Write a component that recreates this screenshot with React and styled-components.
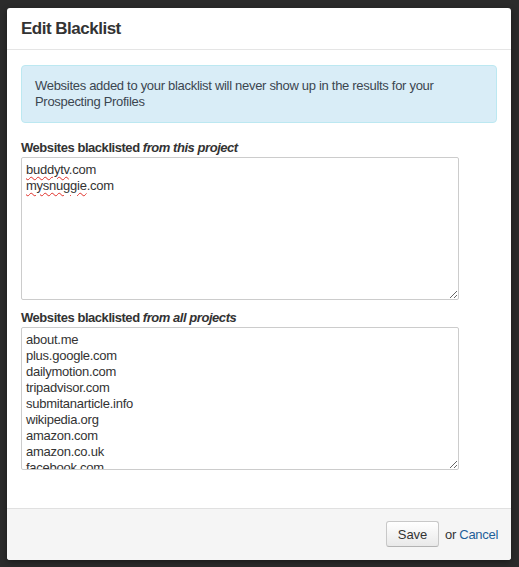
import React from "react";
import styled, { createGlobalStyle } from "styled-components";

const GlobalStyle = createGlobalStyle`
  html, body {
    margin: 0;
    padding: 0;
    background: #2b2b2b;
  }
  body {
    font-family: "Liberation Sans", Arial, sans-serif;
    font-size: 13px;
    color: #333;
  }
`;

const thisProject = ["buddytv.com", "mysnuggie.com"];
const allProjects = [
  "about.me",
  "plus.google.com",
  "dailymotion.com",
  "tripadvisor.com",
  "submitanarticle.info",
  "wikipedia.org",
  "amazon.com",
  "amazon.co.uk",
  "facebook.com",
];

// words the browser's spell checker flags in the reference
const flagged = { "buddytv.com": "buddytv", "mysnuggie.com": "mysnuggie" };

const App = () => {
  return (
    <Page>
      <GlobalStyle />
      <Modal>
        <Header>
          <Title>Edit Blacklist</Title>
        </Header>
        <Body>
          <Alert>
            Websites added to your blacklist will never show up in the results
            for your Prospecting Profiles
          </Alert>
          <Label>
            Websites blacklisted <em>from this project</em>
          </Label>
          <ListBox contentEditable suppressContentEditableWarning spellCheck>
            {thisProject.map((site) => {
              const word = flagged[site];
              return (
                <div key={site}>
                  {word ? (
                    <>
                      <Misspelt>{word}</Misspelt>
                      {site.slice(word.length)}
                    </>
                  ) : (
                    site
                  )}
                </div>
              );
            })}
          </ListBox>
          <Label>
            Websites blacklisted <em>from all projects</em>
          </Label>
          <ListBox contentEditable suppressContentEditableWarning>
            {allProjects.map((site) => (
              <div key={site}>{site}</div>
            ))}
          </ListBox>
        </Body>
        <Footer>
          <Button type="button">Save</Button>
          <Or>
            or <CancelLink href="#">Cancel</CancelLink>
          </Or>
        </Footer>
      </Modal>
    </Page>
  );
};

export default App;

const Page = styled.div`
  padding: 8px 0 0 7px;
  min-height: 567px;
  box-sizing: border-box;
`;

const Modal = styled.div`
  width: 504px;
  background: #fff;
  border-radius: 3px;
  overflow: hidden;
  box-shadow: 0 2px 6px rgba(0, 0, 0, 0.4);
`;

const Header = styled.div`
  padding: 11px 14px 11px;
  border-bottom: 1px solid #e5e5e5;
`;

const Title = styled.h3`
  margin: 0;
  font-size: 17px;
  line-height: 19px;
  font-weight: bold;
  letter-spacing: -0.5px;
  color: #333;
`;

const Body = styled.div`
  padding: 15px 14px 29px;
`;

const Alert = styled.div`
  background: #d9edf7;
  border: 1px solid #bce8f1;
  border-radius: 4px;
  color: #3b4650;
  padding: 12px 13px 12px;
  line-height: 16px;
  letter-spacing: -0.3px;
  margin-bottom: 16px;
`;

const Label = styled.div`
  font-weight: bold;
  line-height: 18px;
  letter-spacing: -0.45px;
  color: #333;
  em {
    font-style: italic;
  }
`;

const ListBox = styled.div`
  width: 438px;
  height: 143px;
  box-sizing: border-box;
  border: 1px solid #ccc;
  border-radius: 2px;
  padding: 4px 4px;
  line-height: 16px;
  letter-spacing: -0.25px;
  color: #333;
  overflow: hidden;
  resize: vertical;
  margin-bottom: 9px;
  outline: none;
  white-space: nowrap;
`;

const Misspelt = styled.span`
  text-decoration: underline wavy #e0302a;
  text-decoration-thickness: 1px;
  text-underline-offset: 2px;
`;

const Footer = styled.div`
  display: flex;
  justify-content: flex-end;
  align-items: center;
  background: #f5f5f5;
  border-top: 1px solid #e0e0e0;
  padding: 12px 13px 13px;
`;

const Button = styled.button`
  width: 53px;
  height: 26px;
  font-family: "Liberation Sans", Arial, sans-serif;
  font-size: 13px;
  color: #333;
  background: linear-gradient(#ffffff, #e9e9e9);
  border: 1px solid #c8c8c8;
  border-bottom-color: #b3b3b3;
  border-radius: 3px;
  box-shadow: inset 0 1px 0 rgba(255, 255, 255, 0.2);
  cursor: pointer;
`;

const Or = styled.span`
  margin-left: 6px;
  letter-spacing: -0.3px;
  color: #333;
`;

const CancelLink = styled.a`
  color: #1f5f99;
  text-decoration: none;
`;
